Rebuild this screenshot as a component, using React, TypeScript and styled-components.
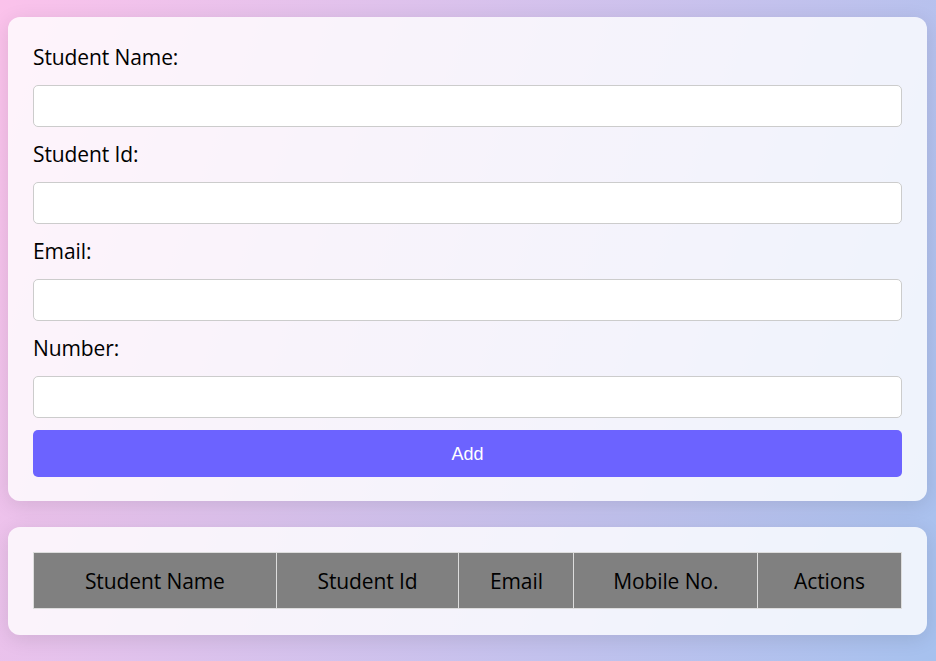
import React from "react";
import styled, { createGlobalStyle } from "styled-components";

const GlobalStyle = createGlobalStyle`
  html, body { margin: 0; padding: 0; }
  body {
    min-height: 100vh;
    background: linear-gradient(110deg, #fbc2eb 0%, #a6c1ee 100%);
    font-family: "Open Sans", "Noto Sans", sans-serif;
  }
  * { box-sizing: border-box; }
`;

const Page = styled.div`
  display: flex;
  flex-direction: column;
  gap: 26px;
  padding: 17px 9px 20px 8px;
`;

const Card = styled.div<{ $bottom?: number }>`
  background: rgba(255, 255, 255, 0.8);
  border-radius: 12px;
  box-shadow: 0 4px 20px rgba(0, 0, 0, 0.1);
  padding: 25px 25px ${(p) => p.$bottom ?? 25}px;
`;

const Form = styled.form`
  display: flex;
  flex-direction: column;
`;

const Label = styled.label`
  display: block;
  font-size: 21px;
  font-weight: 500;
  line-height: 27px;
  letter-spacing: -0.1px;
  color: #000;
  margin-top: 2px;
  margin-bottom: 14px;
`;

const Input = styled.input`
  display: block;
  width: 100%;
  height: 42px;
  border: 1px solid #ccc;
  border-radius: 5px;
  background: #fff;
  margin-bottom: 12px;
  font-size: 16px;
  padding: 0 10px;
`;

const Button = styled.button`
  height: 47px;
  border: none;
  border-radius: 5px;
  background: #6c63ff;
  color: #fff;
  font-family: "Liberation Sans", Arial, sans-serif;
  font-size: 18px;
  padding-top: 2px;
`;

const Table = styled.table`
  width: 100%;
  border-collapse: collapse;
`;

const Th = styled.th`
  background: #808080;
  border: 1px solid #ddd;
  height: 56px;
  padding: 0;
  font-size: 21px;
  font-weight: 500;
  letter-spacing: -0.1px;
  color: #000;
  text-align: center;
`;

const fields = ["Student Name:", "Student Id:", "Email:", "Number:"];
const cols: [string, number][] = [
  ["Student Name", 243],
  ["Student Id", 183],
  ["Email", 115],
  ["Mobile No.", 184],
  ["Actions", 144],
];

export default function App() {
  return (
    <>
      <GlobalStyle />
      <Page>
        <Card $bottom={24}>
          <Form onSubmit={(e) => e.preventDefault()}>
            {fields.map((f) => (
              <React.Fragment key={f}>
                <Label>{f}</Label>
                <Input type="text" />
              </React.Fragment>
            ))}
            <Button type="submit">Add</Button>
          </Form>
        </Card>
        <Card $bottom={26}>
          <Table>
            <thead>
              <tr>
                {cols.map(([c, w]) => (
                  <Th key={c} style={{ width: w }}>
                    {c}
                  </Th>
                ))}
              </tr>
            </thead>
          </Table>
        </Card>
      </Page>
    </>
  );
}
